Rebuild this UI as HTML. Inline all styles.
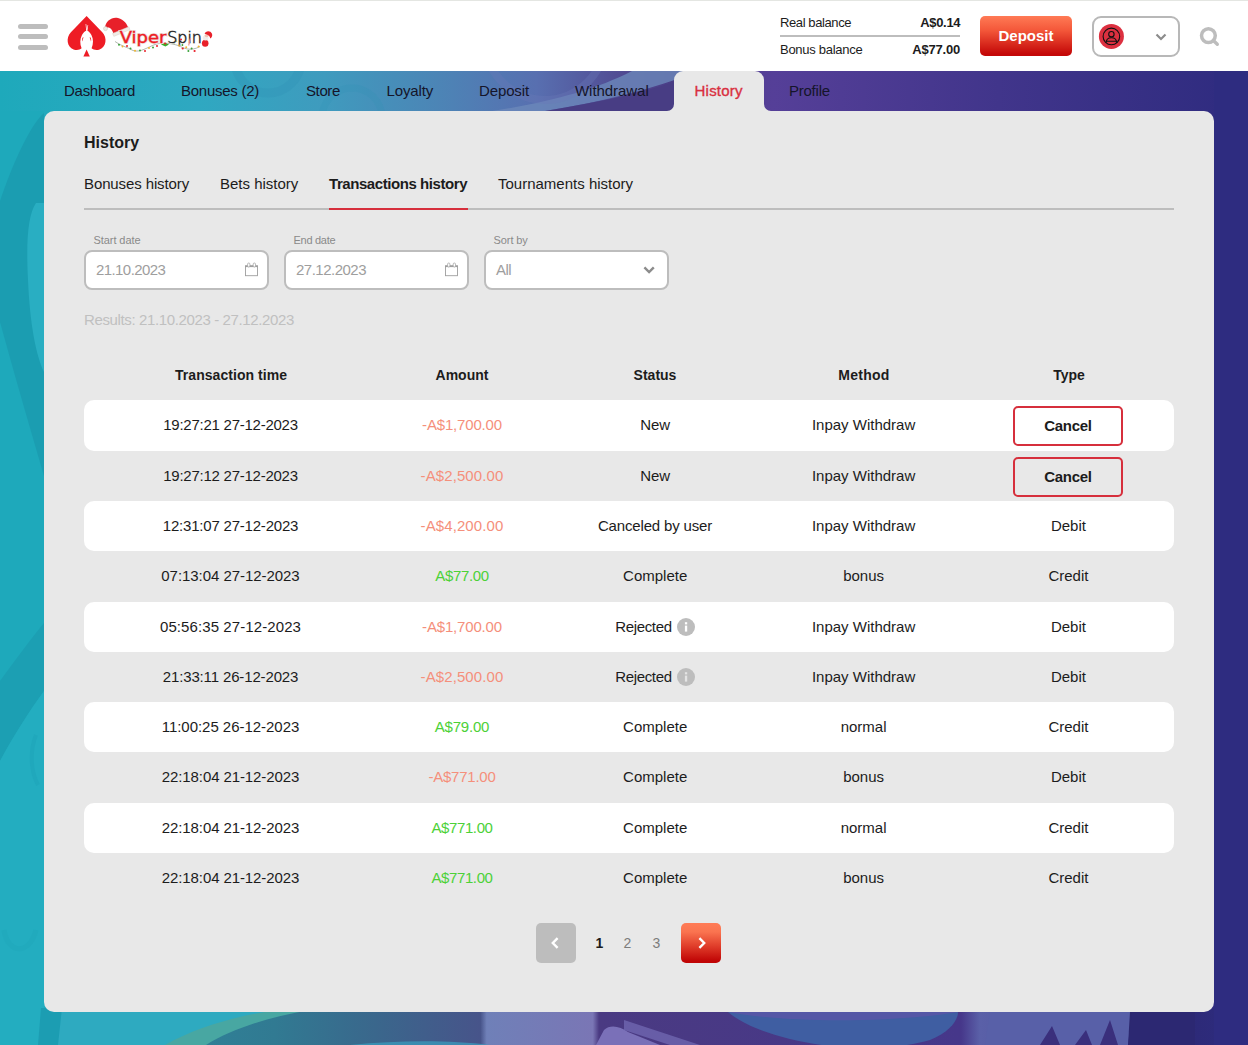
<!DOCTYPE html>
<html lang="en">
<head>
<meta charset="utf-8">
<title>History</title>
<style>
*{box-sizing:border-box;margin:0;padding:0}
html,body{width:1248px;height:1045px;overflow:hidden}
body{font-family:"Liberation Sans",sans-serif;color:#1c1c1c;position:relative;background:#2e2c80}
.abs{position:absolute}
#bg{position:absolute;left:0;top:71px;width:1248px;height:974px;overflow:hidden}
#header{position:absolute;left:0;top:0;width:1248px;height:71px;background:#fff;border-top:1px solid #e4e6e2}
.bar{position:absolute;left:18px;width:30px;height:5px;border-radius:3px;background:#bdbdbd}
.t{position:absolute;white-space:nowrap;line-height:20px}
.c{transform:translateX(-50%)}
#nav .t{font-size:15px;top:81px;color:#15152a}
#panel{position:absolute;left:44px;top:111px;width:1170px;height:901px;background:#e8e8e8;border-radius:10px}
#tab{position:absolute;left:674px;top:71px;width:90px;height:50px;background:#e8e8e8;border-radius:9px 9px 0 0}
.inp{position:absolute;top:250px;width:185px;height:40px;border:2px solid #bdbdbd;border-radius:8px;background:#fff}
.lbl{font-size:11px;color:#8a8a8a;top:230px}
.row{position:absolute;left:84px;width:1090px;height:50.4px;border-radius:10px}
.row.w{background:#fff}
.row .t{font-size:15px;top:15px;line-height:20px;transform:translateX(-50%)}
.neg{color:#f58f7b}
.pos{color:#4cd137}
.th{font-weight:bold;font-size:14px;top:365px}
.cancel{position:absolute;left:929px;top:6px;width:110px;height:40px;border:2px solid #d62f3c;border-radius:5px;background:#fff;font-weight:bold;font-size:15px;text-align:center;line-height:36px;letter-spacing:-0.3px}
.row:not(.w) .cancel{background:#e8e8e8}
.info{position:absolute;left:593px;top:16px;width:18px;height:18px;border-radius:50%;background:#bdbdbd}
.pg{position:absolute;top:923px;width:40px;height:40px;border-radius:5px}
</style>
</head>
<body>
<svg id="bg" viewBox="0 71 1248 974" preserveAspectRatio="none">
<defs>
<linearGradient id="g1" x1="0" x2="1248" y1="0" y2="0" gradientUnits="userSpaceOnUse">
<stop offset="0" stop-color="#1ea9bb"/>
<stop offset="0.16" stop-color="#2fa8c1"/>
<stop offset="0.26" stop-color="#3f9bbe"/>
<stop offset="0.35" stop-color="#4c85b6"/>
<stop offset="0.43" stop-color="#586fb0"/>
<stop offset="0.5" stop-color="#514a92"/>
<stop offset="0.54" stop-color="#4a3d86"/>
<stop offset="0.62" stop-color="#553f98"/>
<stop offset="0.8" stop-color="#41358b"/>
<stop offset="1" stop-color="#2e2b7f"/>
</linearGradient>
<linearGradient id="g2" x1="0" x2="1248" y1="0" y2="0" gradientUnits="userSpaceOnUse">
<stop offset="0" stop-color="#1ea9bb"/>
<stop offset="0.05" stop-color="#2aabc0"/>
<stop offset="0.14" stop-color="#2fa9c0"/>
<stop offset="0.15" stop-color="#2f8197"/>
<stop offset="0.22" stop-color="#317a92"/>
<stop offset="0.3" stop-color="#3a678c"/>
<stop offset="0.385" stop-color="#47548a"/>
<stop offset="0.39" stop-color="#6f80b8"/>
<stop offset="0.475" stop-color="#7a76b5"/>
<stop offset="0.48" stop-color="#4a3a82"/>
<stop offset="0.77" stop-color="#46378a"/>
<stop offset="0.785" stop-color="#5a60a8"/>
<stop offset="0.9" stop-color="#4a4a9a"/>
<stop offset="0.905" stop-color="#2c2870"/>
<stop offset="0.955" stop-color="#2d2a78"/>
<stop offset="1" stop-color="#2e2c80"/>
</linearGradient>
</defs>
<rect x="0" y="71" width="1248" height="974" fill="url(#g1)"/>
<rect x="0" y="111" width="44" height="934" fill="#1ea9bb"/>
<rect x="1214" y="71" width="34" height="974" fill="#2e2c80"/>
<!-- left strip subtle shapes -->
<path d="M44 113 C30 125 12 165 0 201 L0 322 C16 380 32 435 44 476 Z" fill="#1b9db1"/>
<path d="M44 203 L36 203 C28 215 26 240 28 280 C30 325 36 355 44 372 Z" fill="#29aec2"/>
<path d="M44 623 C30 640 14 662 0 681 L0 761 C14 735 30 710 44 691 Z" fill="#1c9fb3"/>
<path d="M44 691 C30 710 14 735 0 761 L0 1045 L44 1045 Z" fill="#23adc0"/>
<path d="M36 735 C30 750 30 770 38 785" fill="none" stroke="#20a8bc" stroke-width="4"/>
<path d="M4 930 C8 955 30 955 36 930" fill="none" stroke="#21aabd" stroke-width="5"/>
<!-- nav strip swirls -->
<path d="M545 111 C600 102 650 90 700 71 L632 71 C595 90 550 102 492 111 Z" fill="#6b88ba" opacity="0.8"/>
<path d="M545 111 C600 102 645 92 674 82 L674 111 Z" fill="#483d84"/>
<circle cx="268" cy="60" r="33" fill="none" stroke="#2f8fb2" stroke-width="9" opacity="0.28"/><circle cx="352" cy="118" r="30" fill="none" stroke="#2f8fb2" stroke-width="7" opacity="0.2"/>
<circle cx="545" cy="40" r="60" fill="none" stroke="#6a78b6" stroke-width="8" opacity="0.35"/>
<!-- bottom strip -->
<rect x="44" y="1008" width="1170" height="37" fill="url(#g2)"/>
<path d="M44 1008 L300 1008 C262 1016 218 1030 192 1045 L44 1045 Z" fill="#2eaac0"/>
<path d="M38 1045 L41 1008 L62 1008 L58 1045 Z" fill="#1c9db2"/>
<path d="M165 1045 C195 1028 235 1016 272 1011 L305 1011 C265 1018 230 1030 206 1045 Z" fill="#48a7a2"/>
<path d="M350 1045 C400 1040 450 1040 490 1045 Z" fill="#3b9fc0" opacity="0.7"/>
<path d="M596 1045 L604 1030 C610 1024 620 1026 628 1032 L660 1045 Z" fill="#7a70b8"/>
<path d="M624 1020 L700 1045 L670 1045 L624 1030 Z" fill="#6f66b0" opacity="0.8"/>
<path d="M728 1012 C760 1040 860 1060 930 1040 C950 1032 958 1020 958 1012 Z" fill="#3f5ea2"/>
<path d="M728 1012 C790 1024 900 1022 958 1012 Z" fill="#5b55a8" opacity="0.8"/>
<path d="M985 1045 L990 1012 L1130 1012 L1128 1045 Z" fill="#5860a8"/>
<path d="M1040 1045 L1052 1026 L1060 1045 Z M1075 1045 L1086 1030 L1092 1045 Z M1100 1045 L1110 1020 L1118 1045 Z" fill="#3a2f7c"/>
<path d="M1128 1045 L1132 1012 L1195 1012 L1195 1045 Z" fill="#2c2872"/>
</svg>

<div id="header">
<div class="bar" style="top:23px"></div><div class="bar" style="top:33.3px"></div><div class="bar" style="top:44px"></div>
<svg id="logo" class="abs" style="left:60px;top:7px" width="160" height="56" viewBox="60 8 160 56">
<path d="M86.6 16 L102.3 32.2 C107.6 38 106.2 46.8 99.6 49.4 C96.6 50.5 93.6 50 91.6 48.3 C93.4 44 93.6 39 91.4 35 C90.2 32.8 88.6 31.2 87.4 30.8 L88.2 25.2 L87.6 25.1 L86.9 29.2 L86.2 24 L85.6 24.1 L86.2 30.8 C84.8 31.2 83.2 32.8 82 35 C79.8 39 79.8 44 81.6 48.3 C79.6 50 76.6 50.5 73.6 49.4 C67 46.8 65.6 38 70.9 32.2 Z" fill="#ee1c25"/>
<path d="M82.9 37.3 C82 38.6 81.8 40.2 82.2 41.6 C82.6 40 83 38.6 83.6 37.6 Z M90.3 37.3 C91.2 38.6 91.4 40.2 91 41.6 C90.6 40 90.2 38.6 89.6 37.6 Z" fill="#ee1c25"/>
<path d="M86.6 49.5 L89.8 56.6 L83.4 56.6 Z" fill="#ee1c25"/>
<path d="M105 28 C105.5 21 112 16.5 118 18 C124 19.5 127.5 24.5 128.5 28.5 L113.5 34 C112.5 30 110.5 27.5 108 27.5 C107 27.5 106 28 105 28 Z" fill="#e8202a"/>
<path d="M112.5 33.5 L128.8 26.8 L130 29.6 L113.8 36.4 Z" fill="#f0ebe6" stroke="#d9d2cb" stroke-width="0.5"/>
<circle cx="105.5" cy="28.6" r="2" fill="#efeae4" stroke="#c9c2ba" stroke-width="0.5"/>
<path d="M115 41.5 C121 46 127 47 133 50.5 C140 53 148 47 155 44.5 C163 42 172 43.5 178 45.5 C184 48 190 52 200 46.5" fill="none" stroke="#7d8a78" stroke-width="0.6"/>
<g>
<circle cx="119" cy="44.8" r="1" fill="#3aa23a"/><circle cx="122.5" cy="46.5" r="1" fill="#f2b632"/><circle cx="127" cy="46" r="1" fill="#e8202a"/><circle cx="130.5" cy="48.5" r="1" fill="#3aa23a"/><circle cx="135" cy="50.8" r="1" fill="#f2b632"/><circle cx="140" cy="50.5" r="1" fill="#3aa23a"/><circle cx="145" cy="51" r="1" fill="#e8202a"/><circle cx="149" cy="48" r="1" fill="#f2b632"/><circle cx="153" cy="47.5" r="1" fill="#3aa23a"/><circle cx="157" cy="46" r="1" fill="#e8202a"/><path d="M161 44.6 L164.6 42.8 L169 44.4 L165.4 46.6 Z" fill="#35b02c"/><circle cx="165.2" cy="43.6" r="1.1" fill="#d8322a"/><circle cx="173.6" cy="43.2" r="0.9" fill="#3aa23a"/><circle cx="176.3" cy="41.2" r="0.9" fill="#f2b632"/><circle cx="182.4" cy="45" r="0.9" fill="#3aa23a"/><circle cx="182.7" cy="48.5" r="1.1" fill="#e8202a"/><circle cx="186.2" cy="47.3" r="1" fill="#f2b632"/><circle cx="188.4" cy="51" r="1" fill="#3aa23a"/><circle cx="191.6" cy="48.6" r="1" fill="#3aa23a"/><circle cx="194.6" cy="51" r="1.1" fill="#e8202a"/><circle cx="198.6" cy="46.6" r="1" fill="#f2b632"/>
</g>
<text x="119.7" y="42.6" font-family="DejaVu Sans, sans-serif" font-size="15.5" textLength="46.8" lengthAdjust="spacingAndGlyphs" stroke="#ebe6e2" stroke-width="1.8" fill="#ebe6e2">Viper</text>
<text x="119.7" y="42.6" font-family="DejaVu Sans, sans-serif" font-size="15.5" textLength="46.8" lengthAdjust="spacingAndGlyphs" stroke="#ee1c25" stroke-width="0.35" fill="#ee1c25">Viper</text>
<text x="167.2" y="42.6" font-family="DejaVu Sans, sans-serif" font-size="15.5" font-weight="200" textLength="34.8" lengthAdjust="spacingAndGlyphs" stroke="#efebe8" stroke-width="1.6" fill="#efebe8">Spin</text>
<text x="167.2" y="42.6" font-family="DejaVu Sans, sans-serif" font-size="15.5" font-weight="200" textLength="34.8" lengthAdjust="spacingAndGlyphs" stroke="#262626" stroke-width="0.45" fill="#262626">Spin</text>
<circle cx="181" cy="39.4" r="1" fill="#e8202a"/><circle cx="179.3" cy="45.6" r="1" fill="#e0a82e"/><path d="M190.6 38 C189.4 40.5 189.6 42.8 188.6 45.4" fill="none" stroke="#f08a93" stroke-width="1.3" opacity="0.85"/>
<ellipse cx="205.2" cy="43.2" rx="3.3" ry="3.5" fill="#e8202a"/>
<ellipse cx="205.6" cy="38" rx="2.9" ry="2.5" fill="#f1ecea"/>
<ellipse cx="206.6" cy="35.6" rx="2" ry="1.6" fill="#f0c4b6"/>
<path d="M204.6 33.8 C205.6 30.6 210.6 30.4 212 33.8 C212.7 35.8 211.8 37.8 210.2 38.4 C210 36.2 208 34.4 204.6 33.8 Z" fill="#e8202a"/>
</svg>
<span class="t" style="left:780px;top:12px;font-size:13px;letter-spacing:-0.4px;color:#1c1c1c">Real balance</span>
<span class="t" style="right:288px;top:12px;font-size:13px;font-weight:bold;letter-spacing:-0.3px;margin-right:-0.3px;color:#1c1c1c">A$0.14</span>
<div class="abs" style="left:780px;top:34px;width:180px;height:2px;background:#bdbdbd"></div>
<span class="t" style="left:780px;top:39px;font-size:13px;letter-spacing:-0.28px;color:#1c1c1c">Bonus balance</span>
<span class="t" style="right:288px;top:39px;font-size:13px;font-weight:bold;letter-spacing:-0.17px;margin-right:-0.17px;color:#1c1c1c">A$77.00</span>
<div class="abs" style="left:980px;top:15px;width:92px;height:40px;border-radius:5px;background:linear-gradient(#ff7a55 0%,#f4583a 35%,#c40808 95%);color:#fff;font-weight:bold;font-size:15px;text-align:center;line-height:40px">Deposit</div>
<div class="abs" style="left:1092px;top:15px;width:88px;height:41px;border:2px solid #b8b8b8;border-radius:9px"></div>
<svg class="abs" style="left:1098px;top:22px" width="26" height="26" viewBox="0 0 26 26"><circle cx="13.4" cy="13.4" r="12.5" fill="#dc3040"/><circle cx="13.4" cy="13.4" r="8.3" fill="none" stroke="#111" stroke-width="1.1"/><circle cx="13.4" cy="11.2" r="2.7" fill="none" stroke="#111" stroke-width="1.1"/><path d="M8.2 19.8 C8.2 16.2 10 14.8 13.4 14.8 C16.8 14.8 18.6 16.2 18.6 19.8 M8.6 18.2 L18.2 18.2" fill="none" stroke="#111" stroke-width="1.1"/></svg>
<svg class="abs" style="left:1154px;top:31px" width="14" height="10" viewBox="0 0 14 10"><path d="M2.5 2.5 L7 7 L11.5 2.5" fill="none" stroke="#8c8c8c" stroke-width="2.2"/></svg>
<svg class="abs" style="left:1196px;top:22px" width="26" height="26" viewBox="0 0 26 26"><circle cx="12.4" cy="12.6" r="6.9" fill="none" stroke="#bdbdbd" stroke-width="3.5"/><path d="M17.6 17.8 L21.3 21.3" stroke="#bdbdbd" stroke-width="3.4" stroke-linecap="round"/></svg>
</div>

<div id="nav">
<span class="t" style="left:64px;letter-spacing:-0.27px">Dashboard</span>
<span class="t" style="left:181px;letter-spacing:-0.26px">Bonuses (2)</span>
<span class="t" style="left:306px;letter-spacing:-0.38px">Store</span>
<span class="t" style="left:386.5px;letter-spacing:-0.14px">Loyalty</span>
<span class="t" style="left:479px;letter-spacing:-0.13px">Deposit</span>
<span class="t" style="left:575px;letter-spacing:-0.05px">Withdrawal</span>
<span class="t" style="left:789px;letter-spacing:-0.24px">Profile</span>
</div>
<div id="tab"></div>
<svg class="abs" style="left:666px;top:103px" width="106" height="8" viewBox="666 103 106 8"><path d="M667 111 A7 7 0 0 0 674 104 L674 111 Z M764 104 A7 7 0 0 0 771 111 L764 111 Z" fill="#e8e8e8"/></svg>
<div id="panel"></div>
<span class="t" style="left:694.5px;top:81px;font-size:15px;color:#d93040;letter-spacing:0.23px;-webkit-text-stroke:0.35px #d93040">History</span>

<span class="t" style="left:84px;top:133px;font-size:16px;font-weight:bold">History</span>
<span class="t" style="left:84px;top:174px;font-size:15px;letter-spacing:-0.11px">Bonuses history</span>
<span class="t" style="left:220px;top:174px;font-size:15px">Bets history</span>
<span class="t" style="left:329px;top:174px;font-size:15px;font-weight:bold;letter-spacing:-0.43px">Transactions history</span>
<span class="t" style="left:498px;top:174px;font-size:15px">Tournaments history</span>
<div class="abs" style="left:84px;top:208px;width:1090px;height:2px;background:#bdbdbd"></div>
<div class="abs" style="left:329px;top:208px;width:139px;height:2px;background:#d62f3c"></div>

<span class="t lbl" style="left:93.5px;letter-spacing:-0.07px">Start date</span>
<span class="t lbl" style="left:293.5px;letter-spacing:-0.28px">End date</span>
<span class="t lbl" style="left:493.6px;letter-spacing:-0.1px">Sort by</span>
<div class="inp" style="left:84px"></div>
<div class="inp" style="left:284px"></div>
<div class="inp" style="left:484px"></div>
<span class="t" style="left:96px;top:260px;font-size:15px;letter-spacing:-0.58px;color:#9e9e9e">21.10.2023</span>
<span class="t" style="left:296px;top:260px;font-size:15px;letter-spacing:-0.51px;color:#9e9e9e">27.12.2023</span>
<span class="t" style="left:496px;top:260px;font-size:15px;letter-spacing:-0.5px;color:#9e9e9e">All</span>
<span class="t" style="left:84px;top:310px;font-size:15px;letter-spacing:-0.37px;color:#c0c0c0">Results: 21.10.2023 - 27.12.2023</span>

<span class="t th c" style="left:231px;letter-spacing:0.05px">Transaction time</span>
<span class="t th c" style="left:462px">Amount</span>
<span class="t th c" style="left:655px">Status</span>
<span class="t th c" style="left:864px;letter-spacing:0.27px">Method</span>
<span class="t th c" style="left:1069px">Type</span>


<svg class="abs" style="left:244px;top:262px" width="15" height="15" viewBox="244 262 15 15"><rect x="245.5" y="266" width="12" height="9.7" fill="#fff" stroke="#9e9e9e" stroke-width="0.9"/><rect x="245.1" y="265.4" width="12.8" height="1.7" fill="#9e9e9e"/><rect x="247.6" y="263" width="2.3" height="4" rx="1.1" fill="#fff" stroke="#9e9e9e" stroke-width="0.7"/><rect x="253.2" y="263" width="2.3" height="4" rx="1.1" fill="#fff" stroke="#9e9e9e" stroke-width="0.7"/></svg>
<svg class="abs" style="left:444px;top:262px" width="15" height="15" viewBox="244 262 15 15"><rect x="245.5" y="266" width="12" height="9.7" fill="#fff" stroke="#9e9e9e" stroke-width="0.9"/><rect x="245.1" y="265.4" width="12.8" height="1.7" fill="#9e9e9e"/><rect x="247.6" y="263" width="2.3" height="4" rx="1.1" fill="#fff" stroke="#9e9e9e" stroke-width="0.7"/><rect x="253.2" y="263" width="2.3" height="4" rx="1.1" fill="#fff" stroke="#9e9e9e" stroke-width="0.7"/></svg>
<svg class="abs" style="left:642px;top:265px" width="14" height="10" viewBox="0 0 14 10"><path d="M2.4 2.4 L7.1 7.1 L11.8 2.4" fill="none" stroke="#8c8c8c" stroke-width="2.4"/></svg>

<div class="pg" style="left:536px;background:#bdbdbd"></div>
<svg class="abs" style="left:548px;top:935px" width="16" height="16" viewBox="0 0 16 16"><path d="M9.6 3.2 L4.8 8 L9.6 12.8" fill="none" stroke="#fff" stroke-width="2.4"/></svg>
<span class="t c" style="left:599.5px;top:933px;font-size:14px;font-weight:bold">1</span>
<span class="t c" style="left:627.4px;top:933px;font-size:14px;color:#7c7c7c">2</span>
<span class="t c" style="left:656.3px;top:933px;font-size:14px;color:#7c7c7c">3</span>
<div class="pg" style="left:681px;background:linear-gradient(#ff7c57 0%,#fa7450 22%,#de3a28 60%,#c00505 95%)"></div>
<svg class="abs" style="left:693px;top:935px" width="16" height="16" viewBox="0 0 16 16"><path d="M6.4 3.2 L11.2 8 L6.4 12.8" fill="none" stroke="#fff" stroke-width="2.4"/></svg>
<div id="rows">
<div class="row w" style="top:400px;height:51px"><span class="t" style="left:146.5px;letter-spacing:-0.25px">19:27:21 27-12-2023</span><span class="t neg" style="left:378px;letter-spacing:-0.18px">-A$1,700.00</span><span class="t" style="left:571.2px">New</span><span class="t" style="left:779.6px">Inpay Withdraw</span><div class="cancel">Cancel</div></div>
<div class="row" style="top:451px;height:50px"><span class="t" style="left:146.5px;letter-spacing:-0.25px">19:27:12 27-12-2023</span><span class="t neg" style="left:378px;letter-spacing:0.1px">-A$2,500.00</span><span class="t" style="left:571.2px">New</span><span class="t" style="left:779.6px">Inpay Withdraw</span><div class="cancel" style="top:5.5px">Cancel</div></div>
<div class="row w" style="top:501px;height:50px"><span class="t" style="left:146.5px;letter-spacing:-0.2px">12:31:07 27-12-2023</span><span class="t neg" style="left:378px;letter-spacing:0.1px">-A$4,200.00</span><span class="t" style="left:571px;letter-spacing:-0.16px">Canceled by user</span><span class="t" style="left:779.6px">Inpay Withdraw</span><span class="t" style="left:984.4px">Debit</span></div>
<div class="row" style="top:551px;height:51px"><span class="t" style="left:146.5px;letter-spacing:-0.05px">07:13:04 27-12-2023</span><span class="t pos" style="left:378px;letter-spacing:-0.36px">A$77.00</span><span class="t" style="left:571.2px">Complete</span><span class="t" style="left:779.6px">bonus</span><span class="t" style="left:984.4px">Credit</span></div>
<div class="row w" style="top:602px;height:50px"><span class="t" style="left:146.5px;letter-spacing:0.09px">05:56:35 27-12-2023</span><span class="t neg" style="left:378px;letter-spacing:-0.18px">-A$1,700.00</span><span class="t" style="left:531.2px;transform:none;letter-spacing:-0.34px">Rejected</span><div class="info"><svg width="18" height="18" viewBox="0 0 18 18"><rect x="7.9" y="7.6" width="2.3" height="6" fill="#ffffff"/><rect x="7.9" y="4.2" width="2.3" height="2.2" fill="#ffffff"/></svg></div><span class="t" style="left:779.6px">Inpay Withdraw</span><span class="t" style="left:984.4px">Debit</span></div>
<div class="row" style="top:652px;height:50px"><span class="t" style="left:146.5px;letter-spacing:-0.14px">21:33:11 26-12-2023</span><span class="t neg" style="left:378px;letter-spacing:0.1px">-A$2,500.00</span><span class="t" style="left:531.2px;transform:none;letter-spacing:-0.34px">Rejected</span><div class="info"><svg width="18" height="18" viewBox="0 0 18 18"><rect x="7.9" y="7.6" width="2.3" height="6" fill="#e4e4e4"/><rect x="7.9" y="4.2" width="2.3" height="2.2" fill="#e4e4e4"/></svg></div><span class="t" style="left:779.6px">Inpay Withdraw</span><span class="t" style="left:984.4px">Debit</span></div>
<div class="row w" style="top:702px;height:50px"><span class="t" style="left:146.5px;letter-spacing:-0.03px">11:00:25 26-12-2023</span><span class="t pos" style="left:378px;letter-spacing:-0.19px">A$79.00</span><span class="t" style="left:571.2px">Complete</span><span class="t" style="left:779.6px">normal</span><span class="t" style="left:984.4px">Credit</span></div>
<div class="row" style="top:752px;height:51px"><span class="t" style="left:146.5px;letter-spacing:-0.09px">22:18:04 21-12-2023</span><span class="t neg" style="left:378px;letter-spacing:-0.24px">-A$771.00</span><span class="t" style="left:571.2px">Complete</span><span class="t" style="left:779.6px">bonus</span><span class="t" style="left:984.4px">Debit</span></div>
<div class="row w" style="top:803px;height:50px"><span class="t" style="left:146.5px;letter-spacing:-0.09px">22:18:04 21-12-2023</span><span class="t pos" style="left:378px;letter-spacing:-0.4px">A$771.00</span><span class="t" style="left:571.2px">Complete</span><span class="t" style="left:779.6px">normal</span><span class="t" style="left:984.4px">Credit</span></div>
<div class="row" style="top:853px;height:50px"><span class="t" style="left:146.5px;letter-spacing:-0.09px">22:18:04 21-12-2023</span><span class="t pos" style="left:378px;letter-spacing:-0.4px">A$771.00</span><span class="t" style="left:571.2px">Complete</span><span class="t" style="left:779.6px">bonus</span><span class="t" style="left:984.4px">Credit</span></div>
</div>
</body>
</html>
